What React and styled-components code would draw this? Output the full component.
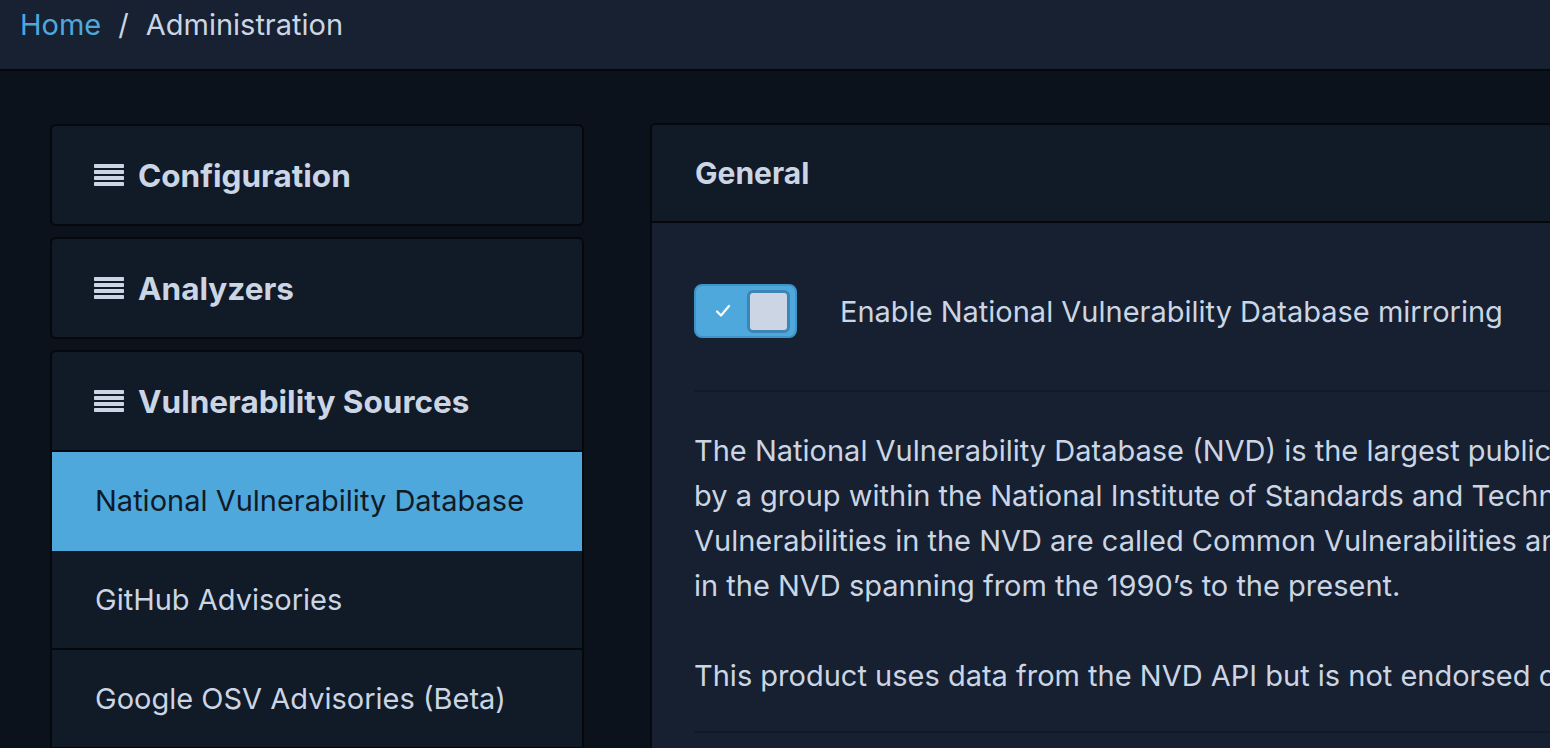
import React from "react";
import styled, { createGlobalStyle } from "styled-components";

const Global = createGlobalStyle`
  html, body { margin: 0; padding: 0; }
  body {
    background: #0c121b;
    font-family: Inter, "Noto Sans", "Liberation Sans", sans-serif;
    color: #cbd5e4;
    overflow: hidden;
    width: 1550px;
    height: 748px;
  }
`;

const TopBar = styled.header`
  height: 71px;
  background: #172131;
  border-bottom: 2px solid #05080c;
  display: flex;
  align-items: flex-start;
  padding: 6px 20px 0;
  box-sizing: border-box;
`;

const Crumbs = styled.nav`
  display: flex;
  align-items: center;
  font-size: 29px;
  line-height: 38px;
  gap: 17px;
`;

const CrumbLink = styled.a`
  color: #4fa8dc;
  text-decoration: none;
`;

const CrumbSep = styled.span`
  color: #cbd5e4;
`;

const CrumbCurrent = styled.span`
  color: #cbd5e4;
`;

const Layout = styled.main`
  display: grid;
  grid-template-columns: 534px 1100px;
  column-gap: 66px;
  padding: 52px 0 0 50px;
  align-items: start;
`;

const Sidebar = styled.aside`
  display: flex;
  flex-direction: column;
  gap: 11px;
  padding-top: 1px;
`;

const SideCard = styled.section`
  background: #111a27;
  border: 2px solid #05080c;
  border-radius: 6px;
  overflow: hidden;
`;

const SideHeader = styled.div`
  height: 98px;
  display: flex;
  align-items: center;
  gap: 14px;
  padding-left: 42px;
  font-size: 31.5px;
  font-weight: 700;
  color: #cbd5e4;
  border-bottom: ${(p) => (p.$open ? "2px solid #05080c" : "none")};
`;

const SideItem = styled.div`
  height: 97px;
  display: flex;
  align-items: center;
  padding-left: 43px;
  font-size: 29px;
  background: ${(p) => (p.$active ? "#4fa8dc" : "#111a27")};
  color: ${(p) => (p.$active ? "#111a27" : "#cbd5e4")};
  border-bottom: 2px solid ${(p) => (p.$active ? "#4fa8dc" : "#05080c")};
`;

const MainCard = styled.section`
  background: #162030;
  border: 2px solid #05080c;
  border-radius: 6px;
  overflow: hidden;
`;

const CardHeader = styled.div`
  height: 96px;
  background: #111a27;
  border-bottom: 2px solid #05080c;
  display: flex;
  align-items: center;
  padding-left: 43px;
  font-size: 30px;
  font-weight: 700;
  color: #cbd5e4;
`;

const CardBody = styled.div`
  padding: 61px 0 80px 42px;
`;

const ToggleRow = styled.label`
  display: flex;
  align-items: center;
  gap: 43px;
  font-size: 29px;
  color: #cbd5e4;
  height: 54px;
`;

const Switch = styled.span`
  width: 103px;
  height: 54px;
  box-sizing: border-box;
  border-radius: 8px;
  background: #4fa8dc;
  border: 2px solid #3d94c8;
  display: flex;
  align-items: center;
  justify-content: space-between;
  padding: 0 5px 0 19px;
`;

const Knob = styled.span`
  width: 43px;
  height: 43px;
  box-sizing: border-box;
  border-radius: 6px;
  background: #cbd5e4;
  border: 3px solid #3a86b6;
`;

const Divider = styled.hr`
  border: none;
  height: 2px;
  background: #111a27;
  margin: ${(p) => p.$m || "0"};
`;

const Para = styled.p`
  margin: 0;
  font-size: 29px;
  line-height: 45px;
  color: #cbd5e4;
  white-space: nowrap;
  & + & { margin-top: 45px; }
`;

const ListIcon = () => (
  <svg width="30" height="22" viewBox="0 0 30 22" aria-hidden="true">
    {[0, 6, 12, 18].map((y) => (
      <rect key={y} x="0" y={y} width="30" height="4" rx="0.8" fill="#cbd5e4" />
    ))}
  </svg>
);

const Check = () => (
  <svg width="16" height="14" viewBox="0 0 16 14" aria-hidden="true">
    <path d="M2 7.5 L6 11.5 L14 2" fill="none" stroke="#ffffff" strokeWidth="2.2" strokeLinecap="round" strokeLinejoin="round" />
  </svg>
);

export default function App() {
  return (
    <>
      <Global />
      <TopBar>
        <Crumbs>
          <CrumbLink href="#">Home</CrumbLink>
          <CrumbSep>/</CrumbSep>
          <CrumbCurrent>Administration</CrumbCurrent>
        </Crumbs>
      </TopBar>
      <Layout>
        <Sidebar>
          <SideCard>
            <SideHeader>
              <ListIcon />
              Configuration
            </SideHeader>
          </SideCard>
          <SideCard>
            <SideHeader>
              <ListIcon />
              Analyzers
            </SideHeader>
          </SideCard>
          <SideCard>
            <SideHeader $open>
              <ListIcon />
              Vulnerability Sources
            </SideHeader>
            <SideItem $active>National Vulnerability Database</SideItem>
            <SideItem>GitHub Advisories</SideItem>
            <SideItem>Google OSV Advisories (Beta)</SideItem>
          </SideCard>
        </Sidebar>
        <MainCard>
          <CardHeader>General</CardHeader>
          <CardBody>
            <ToggleRow>
              <Switch>
                <Check />
                <Knob />
              </Switch>
              Enable National Vulnerability Database mirroring
            </ToggleRow>
            <Divider $m="52px 0 36px" />
            <Para>
              The National Vulnerability Database (NVD) is the largest publicly available source of vulnerability intelligence. It is maintained
              <br />
              by a group within the National Institute of Standards and Technology (NIST) and builds upon the work of MITRE and others.
              <br />
              Vulnerabilities in the NVD are called Common Vulnerabilities and Exposures (CVE). There are over 100,000 CVEs documented
              <br />
              in the NVD spanning from the 1990’s to the present.
            </Para>
            <Para>
              This product uses data from the NVD API but is not endorsed or certified by the NVD.
            </Para>
            <Divider $m="33px 0 0" />
          </CardBody>
        </MainCard>
      </Layout>
    </>
  );
}
